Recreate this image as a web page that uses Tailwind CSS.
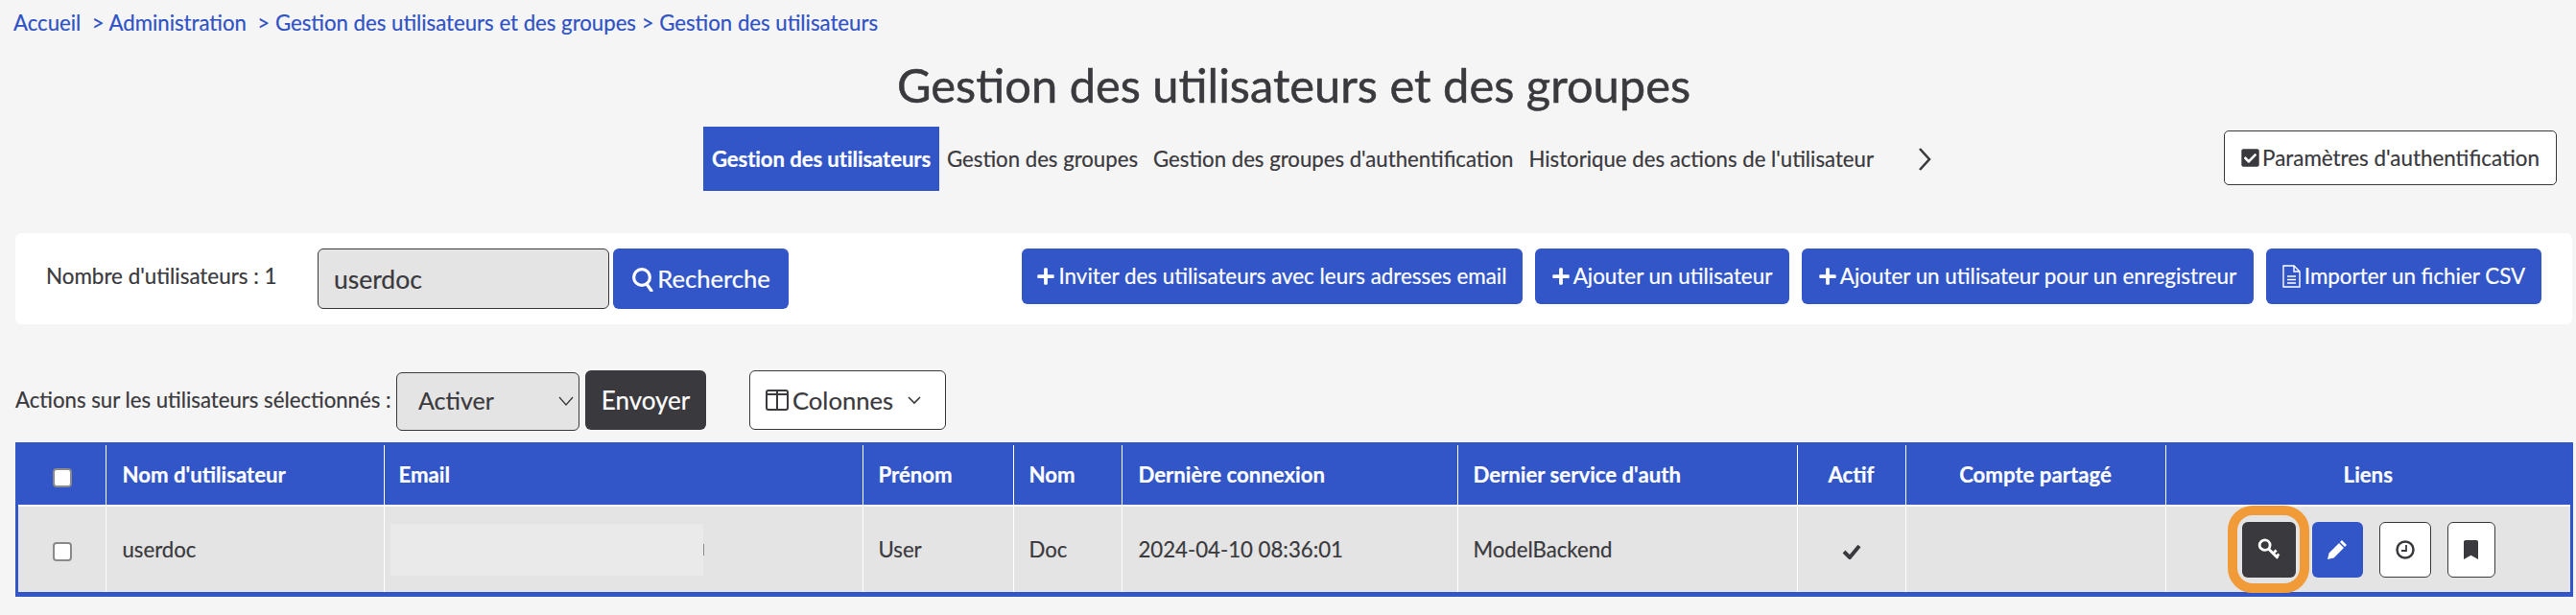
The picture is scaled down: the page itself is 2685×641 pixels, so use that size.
<!DOCTYPE html>
<html lang="fr"><head><meta charset="utf-8"><script src="https://cdn.jsdelivr.net/npm/@tailwindcss/browser@4"></script></head>
<body class="bg-[#f5f5f5] font-['Lato',sans-serif] text-[#3a393d] w-[2685px] h-[641px] overflow-hidden [-webkit-text-stroke:0.2px]">
<nav class="pl-[14px] pt-[12px] h-[64px] text-[22.2px] leading-[24px] text-[#2f52c4] whitespace-pre">Accueil  &gt; Administration  &gt; Gestion des utilisateurs et des groupes &gt; Gestion des utilisateurs</nav>
<h1 class="h-[60px] -mt-[4px] pl-[12px] text-center text-[48.8px] leading-[56px] font-normal [-webkit-text-stroke:0.5px]">Gestion des utilisateurs et des groupes</h1>
<div class="mt-[12px] h-[111px] flex items-start">
  <div class="ml-[733px] h-[67px] flex items-center text-[22.2px]">
    <a class="h-full w-[246px] bg-[#3256c8] text-white font-bold flex items-center justify-center tracking-[-0.1px] whitespace-nowrap">Gestion des utilisateurs</a>
    <a class="ml-[8px]">Gestion des groupes</a>
    <a class="ml-[16px]">Gestion des groupes d'authentification</a>
    <a class="ml-[16px]">Historique des actions de l'utilisateur</a>
    <svg class="ml-[46px] w-[14px] h-[26px]" viewBox="0 0 14 26" fill="none" stroke="#3a393d" stroke-width="2.6"><path d="M2 2l10 11L2 24"/></svg>
  </div>
  <button class="ml-auto mr-[20px] mt-[4px] w-[347px] h-[57px] bg-white border border-[#3a393d] rounded-[5px] text-[22.4px] flex items-center justify-center gap-[3px]">
    <svg class="w-[19px] h-[21px]" viewBox="0 0 448 512" fill="#3a393d"><path d="M400 480H48c-26.51 0-48-21.49-48-48V80c0-26.51 21.49-48 48-48h352c26.51 0 48 21.49 48 48v352c0 26.51-21.49 48-48 48zm-204.686-98.059l184-184c6.248-6.248 6.248-16.379 0-22.627l-22.627-22.627c-6.248-6.248-16.379-6.249-22.628 0L184 302.745l-70.059-70.059c-6.248-6.248-16.379-6.248-22.628 0l-22.627 22.627c-6.248 6.248-6.248 16.379 0 22.627l104 104c6.249 6.25 16.379 6.25 22.628.001z"/></svg>
    Paramètres d'authentification</button>
</div>
<section class="ml-[16px] w-[2665px] h-[95px] bg-white rounded-[6px] pt-[16px] flex items-start">
  <span class="ml-[32px] w-[283px] h-[58px] flex items-center text-[22.4px]">Nombre d'utilisateurs : 1</span>
  <input class="w-[304px] h-[63px] pl-[16px] bg-[#e4e4e4] border border-[#3a393d] rounded-[6px] text-[26.500px] text-[#3a393d]" value="userdoc">
  <button class="ml-[4px] w-[183px] h-[63px] rounded-[6px] bg-[#3256c8] text-white text-[25.600px] flex items-center justify-center gap-[3px]">
    <svg class="w-[24px] h-[26px]" viewBox="0 0 24 26" fill="none" stroke="#fff" stroke-width="3.2"><circle cx="11" cy="11" r="8.4"/><path d="M16 18l5 7" stroke-linecap="round"/></svg>Recherche</button>
  <div class="ml-auto mr-[32px] flex gap-[13px] text-[22.4px] text-white">
    <button class="w-[522px] h-[58px] rounded-[6px] bg-[#3256c8] flex items-center justify-center gap-[4px] whitespace-nowrap"><svg class="w-[18px] h-[20px]" viewBox="0 0 448 512" fill="#fff"><path d="M416 208H272V64c0-17.67-14.33-32-32-32h-32c-17.67 0-32 14.33-32 32v144H32c-17.67 0-32 14.33-32 32v32c0 17.67 14.33 32 32 32h144v144c0 17.67 14.33 32 32 32h32c17.67 0 32-14.33 32-32V304h144c17.67 0 32-14.33 32-32v-32c0-17.67-14.33-32-32-32z"/></svg>Inviter des utilisateurs avec leurs adresses email</button>
    <button class="w-[265px] h-[58px] rounded-[6px] bg-[#3256c8] flex items-center justify-center gap-[4px] whitespace-nowrap"><svg class="w-[18px] h-[20px]" viewBox="0 0 448 512" fill="#fff"><path d="M416 208H272V64c0-17.67-14.33-32-32-32h-32c-17.67 0-32 14.33-32 32v144H32c-17.67 0-32 14.33-32 32v32c0 17.67 14.33 32 32 32h144v144c0 17.67 14.33 32 32 32h32c17.67 0 32-14.33 32-32V304h144c17.67 0 32-14.33 32-32v-32c0-17.67-14.33-32-32-32z"/></svg>Ajouter un utilisateur</button>
    <button class="w-[471px] h-[58px] rounded-[6px] bg-[#3256c8] flex items-center justify-center gap-[4px] whitespace-nowrap"><svg class="w-[18px] h-[20px]" viewBox="0 0 448 512" fill="#fff"><path d="M416 208H272V64c0-17.67-14.33-32-32-32h-32c-17.67 0-32 14.33-32 32v144H32c-17.67 0-32 14.33-32 32v32c0 17.67 14.33 32 32 32h144v144c0 17.67 14.33 32 32 32h32c17.67 0 32-14.33 32-32V304h144c17.67 0 32-14.33 32-32v-32c0-17.67-14.33-32-32-32z"/></svg>Ajouter un utilisateur pour un enregistreur</button>
    <button class="w-[287px] h-[58px] rounded-[6px] bg-[#3256c8] flex items-center justify-center gap-[4px] whitespace-nowrap"><svg class="w-[19px] h-[24px]" viewBox="0 0 19 24" fill="none" stroke="#fff" stroke-width="1.4"><path d="M1 1h11l6 6v16H1zM12 1v6h6M5 12h9M5 15.5h9M5 19h9"/></svg>Importer un fichier CSV</button>
  </div>
</section>
<div class="mt-[48px] ml-[16px] h-[62px] flex items-center text-[22.2px]">
  <span class="w-[397px] whitespace-nowrap">Actions sur les utilisateurs sélectionnés :</span>
  <div class="relative mt-[2px]"><select class="appearance-none w-[191px] h-[61px] pl-[22px] bg-[#e4e4e4] border border-[#3a393d] rounded-[6px] text-[25px]"><option>Activer</option></select>
    <svg class="absolute right-[6px] top-[25px] w-[16px] h-[10px]" viewBox="0 0 16 10" fill="none" stroke="#3a393d" stroke-width="1.3"><path d="M1 1l7 8 7-8"/></svg></div>
  <button class="ml-[6px] w-[126px] h-[62px] rounded-[6px] bg-[#3a393d] text-white text-[26px]">Envoyer</button>
  <button class="ml-[45px] w-[205px] h-[62px] pl-[16px] rounded-[6px] bg-white border border-[#3a393d] text-[25.600px] flex items-center justify-start gap-[4px]">
    <svg class="w-[24px] h-[22px]" viewBox="0 0 24 22" fill="none" stroke="#3a393d" stroke-width="2"><rect x="1" y="1" width="22" height="20" rx="2"/><path d="M12 1v20M1 5h22"/></svg>Colonnes
    <svg class="ml-[11px] w-[14px] h-[9px]" viewBox="0 0 14 9" fill="none" stroke="#3a393d" stroke-width="1.6"><path d="M1 1l6 6 6-6"/></svg></button>
</div>
<div class="mt-[13px] ml-[16px] w-[2666px] h-[161px] border-[3px] border-[#3256c8] bg-[#3256c8]">
<table class="table-fixed w-[2660px] text-[22.2px]">
  <colgroup><col class="w-[91px]"><col class="w-[290px]"><col class="w-[499px]"><col class="w-[157px]"><col class="w-[113px]"><col class="w-[350px]"><col class="w-[354px]"><col class="w-[113px]"><col class="w-[271px]"><col></colgroup>
  <thead class="text-white font-bold text-left">
    <tr class="h-[63px]">
      <th class="align-middle text-center pl-[2px]"><input type="checkbox" class="appearance-none w-[20px] h-[20px] align-middle bg-white border-2 border-[#8a8a8a] rounded-[4px]"></th>
      <th class="border-l border-white pl-[17px] font-bold">Nom d'utilisateur</th>
      <th class="border-l border-white pl-[15px] font-bold">Email</th>
      <th class="border-l border-white pl-[16px] font-bold">Prénom</th>
      <th class="border-l border-white pl-[16px] font-bold">Nom</th>
      <th class="border-l border-white pl-[17px] font-bold">Dernière connexion</th>
      <th class="border-l border-white pl-[16px] font-bold">Dernier service d'auth</th>
      <th class="border-l border-white text-center font-bold">Actif</th>
      <th class="border-l border-white text-center font-bold">Compte partagé</th>
      <th class="border-l border-white text-center font-bold">Liens</th>
    </tr>
  </thead>
  <tbody class="bg-[#e4e4e4] border-t-2 border-white">
    <tr class="h-[90px]">
      <td class="text-center pl-[2px]"><input type="checkbox" class="appearance-none w-[20px] h-[20px] align-middle bg-white border-2 border-[#8a8a8a] rounded-[4px]"></td>
      <td class="border-l border-white pl-[17px]">userdoc</td>
      <td class="border-l border-white pl-[6px]"><div class="flex items-center"><div class="w-[326px] h-[54px] bg-[#eaeaea]"></div><div class="w-[1px] h-[12px] bg-[#8a8a8a]"></div></div></td>
      <td class="border-l border-white pl-[16px]">User</td>
      <td class="border-l border-white pl-[16px]">Doc</td>
      <td class="border-l border-white pl-[17px]">2024-04-10 08:36:01</td>
      <td class="border-l border-white pl-[16px]">ModelBackend</td>
      <td class="border-l border-white text-center"><svg class="inline w-[20px] h-[16px]" viewBox="0 0 20 16" fill="none" stroke="#3a393d" stroke-width="4"><path d="M2 8l6 6L18 2"/></svg></td>
      <td class="border-l border-white"></td>
      <td class="border-l border-white">
        <div class="flex items-center ml-[79px] relative">
          <div class="absolute left-[-15px] top-[-17px] w-[85px] h-[91px] border-[10px] border-[#f19a38] rounded-[26px]"></div>
          <a class="w-[56px] h-[58px] rounded-[6px] bg-[#3a393d] flex items-center justify-center"><svg class="w-[24px] h-[23px]" viewBox="0 0 22 21" fill="none" stroke="#fff" stroke-width="2.6"><ellipse cx="7" cy="6.500" rx="5" ry="4.800"/><path d="M10.500 10l9 9M15 14.500l3-3M18 17.500l2.500-2.500"/></svg></a>
          <a class="ml-[17px] w-[53px] h-[58px] rounded-[6px] bg-[#3256c8] flex items-center justify-center"><svg class="w-[20px] h-[20px]" viewBox="0 0 20 20" fill="#fff"><path d="M15 0l5 5-2 2-5-5zM12 3l5 5L6.500 18.500 0 20l1.500-6.500z"/></svg></a>
          <a class="ml-[17px] w-[54px] h-[58px] rounded-[6px] bg-white border border-[#3a393d] flex items-center justify-center"><svg class="w-[20px] h-[20px]" viewBox="0 0 20 20" fill="none" stroke="#3a393d" stroke-width="2.500"><circle cx="10" cy="10" r="8.500"/><path d="M11 5v6H6" stroke-width="1.800"/></svg></a>
          <a class="ml-[17px] w-[50px] h-[58px] rounded-[6px] bg-white border border-[#3a393d] flex items-center justify-center"><svg class="w-[17px] h-[20px]" viewBox="0 0 384 512" fill="#3a393d"><path d="M0 512V48C0 21.49 21.49 0 48 0h288c26.51 0 48 21.49 48 48v464L192 400 0 512z"/></svg></a>
        </div>
      </td>
    </tr>
  </tbody>
</table>
</div>
</body></html>
